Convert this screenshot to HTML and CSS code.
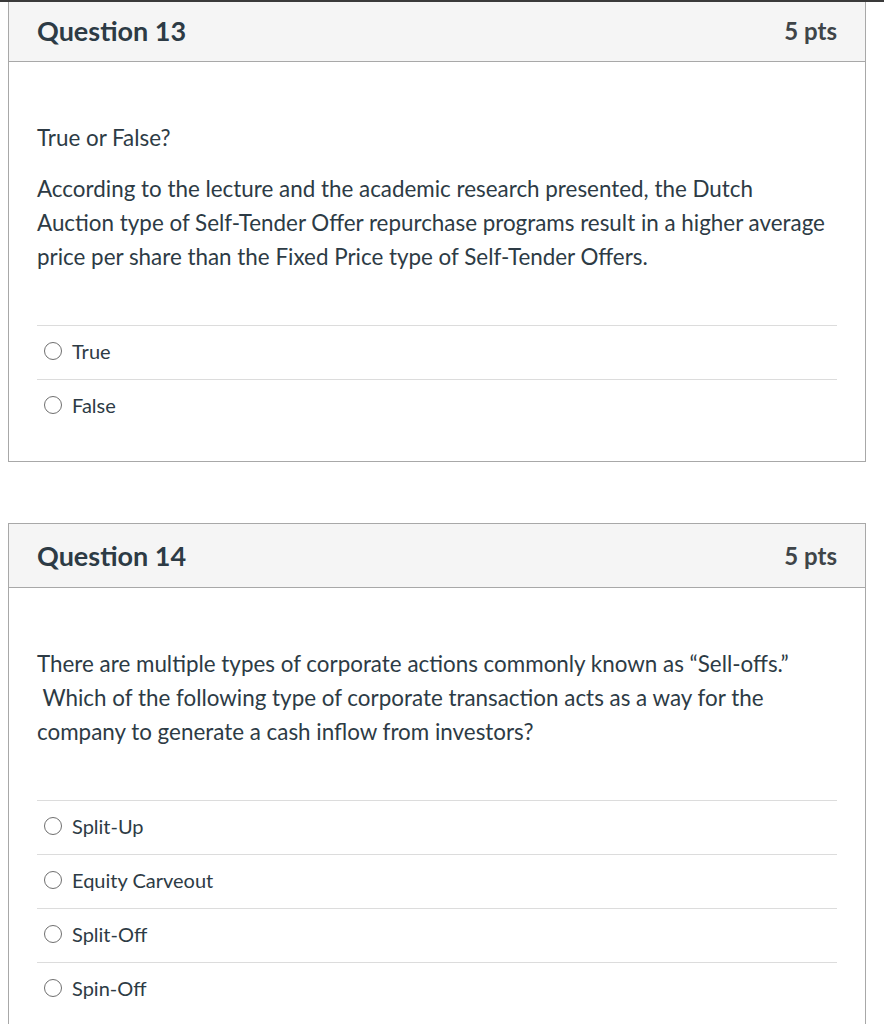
FILE: index.html
```html
<!DOCTYPE html>
<html>
<head>
<meta charset="utf-8">
<link rel="stylesheet" href="styles.css">
</head>
<body>
<div class="topline"></div>
<div class="page">
  <div class="question first">
    <div class="q-header">
      <span class="q-title">Question 13</span>
      <span class="q-pts">5 pts</span>
    </div>
    <div class="q-body">
      <div class="q-text">
        <p>True or False?</p>
        <p>According to the lecture and the academic research presented, the Dutch<br>Auction type of Self-Tender Offer repurchase programs result in a higher average price per share than the Fixed Price type of Self-Tender Offers.</p>
      </div>
      <div class="answers">
        <div class="answer"><span class="radio"></span><span class="label">True</span></div>
        <div class="answer"><span class="radio"></span><span class="label">False</span></div>
      </div>
    </div>
  </div>

  <div class="question">
    <div class="q-header">
      <span class="q-title">Question 14</span>
      <span class="q-pts">5 pts</span>
    </div>
    <div class="q-body">
      <div class="q-text">
        <p>There are multiple types of corporate actions commonly known as “Sell-offs.”<br>&nbsp;Which of the following type of corporate transaction acts as a way for the company to generate a cash inflow from investors?</p>
      </div>
      <div class="answers">
        <div class="answer"><span class="radio"></span><span class="label">Split-Up</span></div>
        <div class="answer"><span class="radio"></span><span class="label">Equity Carveout</span></div>
        <div class="answer"><span class="radio"></span><span class="label">Split-Off</span></div>
        <div class="answer"><span class="radio"></span><span class="label">Spin-Off</span></div>
      </div>
    </div>
  </div>
</div>
</body>
</html>
```

FILE: styles.css
```css
html, body {
  margin: 0;
  padding: 0;
  background: #ffffff;
}
body {
  font-family: Lato, "Noto Sans", sans-serif;
  color: #2d3b45;
  overflow: hidden;
}
.topline {
  height: 2px;
  background: #3a3a3a;
}
.page {
  padding-left: 8px;
  width: 858px;
}
.question {
  border: 1px solid #a8a8a8;
  margin-top: 61px;
}
.question.first {
  margin-top: 0;
  border-top: none;
}
.q-header {
  display: flex;
  justify-content: space-between;
  align-items: center;
  height: 64px;
  padding: 0 28px;
  background: #f5f5f5;
  border-bottom: 1px solid #a8a8a8;
  box-sizing: border-box;
}
.question.first .q-header {
  height: 60px;
  padding-bottom: 2px;
}
.q-title {
  font-size: 27px;
  font-weight: 700;
}
.q-pts {
  font-size: 24px;
  font-weight: 700;
  color: #3f4549;
}
.q-body {
  padding: 42px 28px 28px 28px;
}
.q-text p {
  margin: 17px 0;
  font-size: 22.4px;
  line-height: 34px;
}
.answers {
  margin-top: 51px;
}
.answer {
  display: flex;
  align-items: center;
  height: 54px;
  border-top: 1px solid #dcdcdc;
  box-sizing: border-box;
  padding-left: 7px;
  padding-bottom: 4px;
}
.radio {
  width: 16px;
  height: 16px;
  border: 1.5px solid #6f6f6f;
  border-radius: 50%;
  margin-right: 10px;
  flex: none;
}
.label {
  font-size: 20px;
}
```
